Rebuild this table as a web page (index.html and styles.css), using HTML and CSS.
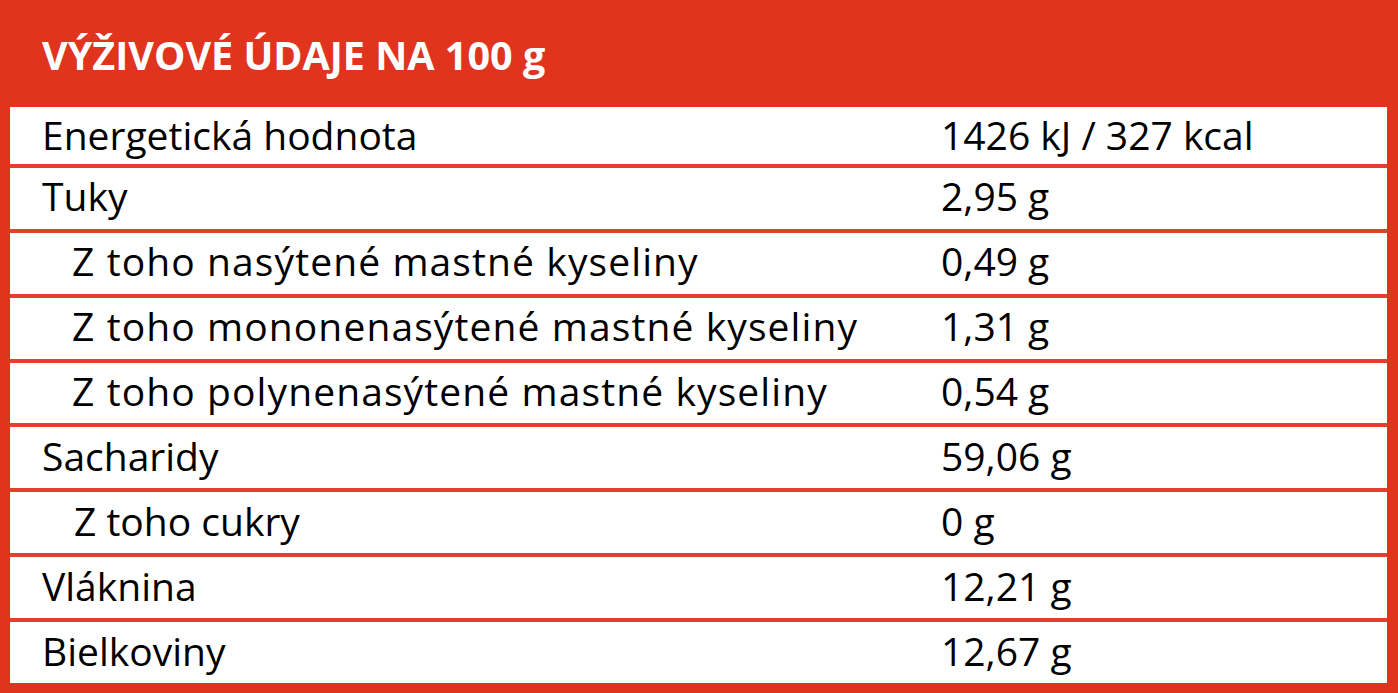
FILE: index.html
```html
<!DOCTYPE html>
<html lang="sk">
<head>
<meta charset="utf-8">
<title>Výživové údaje</title>
<link rel="stylesheet" href="styles.css">
</head>
<body>
<div class="panel">
  <h1 class="title">VÝŽIVOVÉ ÚDAJE NA 100 g</h1>
  <div class="table">
    <div class="row first"><span class="name">Energetická hodnota</span><span class="val">1426 kJ / 327 kcal</span></div>
    <div class="row"><span class="name">Tuky</span><span class="val">2,95 g</span></div>
    <div class="row sub"><span class="name wide">Z toho nasýtené mastné kyseliny</span><span class="val">0,49 g</span></div>
    <div class="row sub"><span class="name wide">Z toho mononenasýtené mastné kyseliny</span><span class="val">1,31 g</span></div>
    <div class="row sub"><span class="name wide">Z toho polynenasýtené mastné kyseliny</span><span class="val">0,54 g</span></div>
    <div class="row"><span class="name">Sacharidy</span><span class="val">59,06 g</span></div>
    <div class="row sub"><span class="name cukry">Z toho cukry</span><span class="val">0 g</span></div>
    <div class="row"><span class="name">Vláknina</span><span class="val">12,21 g</span></div>
    <div class="row"><span class="name">Bielkoviny</span><span class="val">12,67 g</span></div>
  </div>
</div>
</body>
</html>
```
FILE: styles.css
```css
html, body {
  margin: 0;
  padding: 0;
  background: #e0341f;
}
.panel {
  width: 1398px;
  height: 693px;
  display: flex;
  flex-direction: column;
  background: #e0341f;
  font-family: "Open Sans", "DejaVu Sans", sans-serif;
}
.title {
  margin: 0;
  height: 107px;
  box-sizing: border-box;
  padding: 30px 0 0 42px;
  font-size: 39.5px;
  font-weight: 700;
  line-height: 50px;
  color: #ffffff;
}
.table {
  flex: 1;
  margin: 0 11px 10px 10px;
  display: flex;
  flex-direction: column;
  gap: 4px;
  background: #e2402d;
}
.row {
  flex: 1;
  box-sizing: border-box;
  padding-bottom: 4px;
  background: #ffffff;
  display: grid;
  grid-template-columns: 931px 1fr;
  align-items: center;
  font-size: 39px;
  line-height: 40px;
  color: #000000;
}
.row.first {
  padding-bottom: 0;
}
.name {
  padding-left: 32px;
  white-space: nowrap;
}
.sub .name {
  padding-left: 62px;
}
.sub .wide {
  letter-spacing: 1.1px;
}
.sub .cukry {
  padding-left: 64px;
}
```
